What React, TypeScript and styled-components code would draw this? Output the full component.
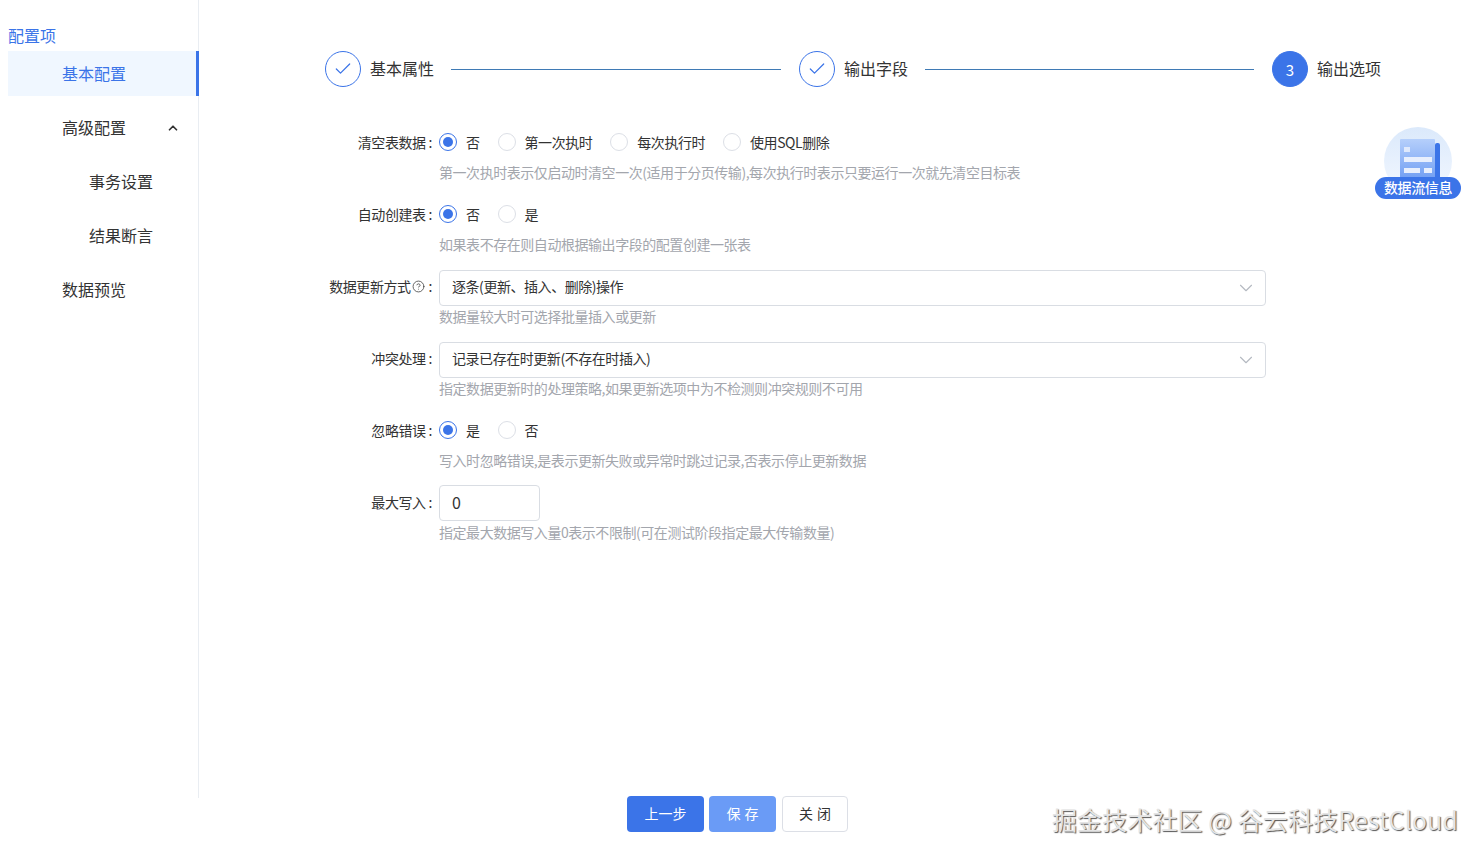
import React, {FC} from "react";
import styled, {createGlobalStyle} from "styled-components";
import {Check, ChevronDown, ChevronUp, CircleHelp} from "lucide-react";

const GlobalStyle = createGlobalStyle`
  html, body {
    margin: 0;
    padding: 0;
    background: #fff;
  }
  body {
    font-family: "Noto Sans CJK SC", "Noto Sans", sans-serif;
    color: #333;
    overflow: hidden;
  }
  * {
    box-sizing: border-box;
  }
`;

const Page = styled.div`
  position: relative;
  width: 1483px;
  height: 859px;
  display: flex;
  flex-direction: column;
`;
const Body = styled.div`
  display: flex;
  height: 798px;
`;
const Sidebar = styled.aside`
  width: 191px;
  margin-left: 8px;
  padding-top: 51px;
  border-right: 1px solid #e9edf2;
  position: relative;
`;
const SideTitle = styled.div`
  position: absolute;
  left: 0;
  top: 23px;
  font-size: 16px;
  line-height: 24px;
  color: #3b74e8;
`;
const MenuItem = styled.div<{$active?: boolean; $indent: number}>`
  height: 45px;
  margin-bottom: 9px;
  margin-right: -1px;
  padding: 0 19px 2px ${(props) => props.$indent}px;
  display: flex;
  align-items: center;
  justify-content: space-between;
  font-size: 16px;
  color: ${(props) => (props.$active ? "#3b74e8" : "#333")};
  background: ${(props) => (props.$active ? "#f0f7ff" : "transparent")};
  border-right: ${(props) => (props.$active ? "3px solid #3b74e8" : "none")};
  svg {
    margin-bottom: -2px;
  }
`;
const Main = styled.main`
  flex: 1;
  min-width: 0;
  padding: 51px 0 0 126px;
`;
const Steps = styled.div`
  display: flex;
  align-items: center;
  height: 36px;
  width: 1056px;
  margin-bottom: 37px;
`;
const StepCircle = styled.div<{$current?: boolean}>`
  width: 36px;
  height: 36px;
  border-radius: 50%;
  flex: none;
  display: flex;
  align-items: center;
  justify-content: center;
  font-size: 15px;
  border: 1px solid #3b74e8;
  color: ${(props) => (props.$current ? "#fff" : "#3b74e8")};
  background: ${(props) => (props.$current ? "#3b74e8" : "#fff")};
`;
const StepLabel = styled.span`
  flex: none;
  margin-left: 9px;
  padding-bottom: 2px;
  font-size: 16px;
  line-height: 34px;
  color: #333;
`;
const StepLine = styled.div<{$width: number}>`
  flex: none;
  width: ${(props) => props.$width}px;
  height: 1px;
  margin: 0 18px 0 17px;
  background: #3f7ab5;
`;
const Form = styled.div`
  display: flex;
  flex-direction: column;
  width: 941px;
`;
const FormItem = styled.div`
  display: grid;
  grid-template-columns: 114px 1fr;
  height: 72px;
`;
const Label = styled.label`
  height: 36px;
  display: flex;
  align-items: center;
  justify-content: flex-end;
  padding-right: 7px;
  font-size: 14px;
  letter-spacing: -0.45px;
  color: #333;
  white-space: nowrap;
  svg {
    flex: none;
    margin: 0 1px;
    color: #444;
  }
`;
const Colon = styled.span`
  margin-left: 3px;
`;
const Control = styled.div`
  min-width: 0;
`;
const RadioRow = styled.div`
  height: 36px;
  display: flex;
  align-items: center;
`;
const RadioItem = styled.span`
  display: inline-flex;
  align-items: center;
  margin-right: 18px;
  font-size: 14px;
  letter-spacing: -0.45px;
  color: #333;
`;
const RadioDot = styled.span<{$checked?: boolean}>`
  width: 18px;
  height: 18px;
  margin-right: 9px;
  border-radius: 50%;
  position: relative;
  background: #fff;
  border: 1px solid ${(props) => (props.$checked ? "#3b74e8" : "#dcdfe6")};
  &::after {
    content: "";
    display: ${(props) => (props.$checked ? "block" : "none")};
    position: absolute;
    left: 3px;
    top: 3px;
    width: 10px;
    height: 10px;
    border-radius: 50%;
    background: #3b74e8;
  }
`;
const SelectBox = styled.div`
  height: 36px;
  margin: 2px 0 -2px;
  display: flex;
  align-items: center;
  justify-content: space-between;
  padding: 0 8px 4px 12px;
  border: 1px solid #d9dde3;
  border-radius: 4px;
  font-size: 14px;
  letter-spacing: -0.45px;
  color: #333;
  background: #fff;
  svg {
    margin-bottom: -4px;
    color: #b4b9c1;
  }
`;
const NumberBox = styled.div`
  width: 101px;
  height: 36px;
  margin: 1px 0 -1px;
  display: flex;
  align-items: center;
  padding: 0 12px 2px;
  border: 1px solid #d9dde3;
  border-radius: 4px;
  font-size: 16px;
  color: #333;
`;
const Help = styled.div`
  margin-top: 2px;
  font-size: 14px;
  letter-spacing: -0.45px;
  line-height: 20px;
  color: #a3a6ad;
  white-space: nowrap;
`;
const Footer = styled.footer`
  height: 36px;
  margin-top: -2px;
  display: flex;
  gap: 5px;
  padding-left: 627px;
`;
const Button = styled.button<{$kind: "primary" | "faded" | "plain"; $width: number}>`
  width: ${(props) => props.$width}px;
  height: 36px;
  margin-left: ${(props) => (props.$kind === "plain" ? "1px" : "0")};
  padding: ${(props) => (props.$kind === "primary" ? "0 0 3px" : "0 0 3px 4px")};
  border-radius: 4px;
  font-family: inherit;
  font-size: 14px;
  letter-spacing: ${(props) => (props.$kind === "primary" ? "0" : "4px")};
  color: ${(props) => (props.$kind === "plain" ? "#333" : "#fff")};
  border: 1px solid ${(props) => (props.$kind === "plain" ? "#dcdfe6" : "transparent")};
  background: ${(props) => {
    if (props.$kind === "primary") return "#3b74e8";
    if (props.$kind === "faded") return "#6a9bf6";
    return "#fff";
  }};
`;
const FlowBadge = styled.div`
  position: absolute;
  left: 1375px;
  top: 127px;
  width: 86px;
  height: 72px;
`;
const FlowPill = styled.div`
  position: absolute;
  left: 0;
  bottom: 0;
  width: 86px;
  height: 22px;
  border-radius: 11px;
  background: #3b74e8;
  color: #fff;
  font-size: 14px;
  font-weight: 500;
  letter-spacing: -0.4px;
  line-height: 21px;
  text-align: center;
  white-space: nowrap;
`;
const FlowIcon = styled.svg`
  position: absolute;
  left: 9px;
  top: 0;
`;
const Watermark = styled.div`
  position: absolute;
  left: 1052px;
  top: 801px;
  font-size: 25px;
  letter-spacing: 0.1px;
  line-height: 36px;
  white-space: nowrap;
  color: #e4e4e4;
  text-shadow: 1px 1px 1px #555;
`;

const FlowGlyph: FC = () => (
    <FlowIcon width="68" height="68" viewBox="0 0 68 68">
        <defs>
            <linearGradient id="flowBg" x1="0" y1="0" x2="0" y2="1">
                <stop offset="0" stopColor="#dbe9fb"/>
                <stop offset="1" stopColor="#f3f8ff"/>
            </linearGradient>
            <linearGradient id="flowDoc" x1="0" y1="0" x2="0" y2="1">
                <stop offset="0" stopColor="#b5cffb"/>
                <stop offset="1" stopColor="#6b9af2"/>
            </linearGradient>
        </defs>
        <circle cx="34" cy="34" r="34" fill="url(#flowBg)"/>
        <rect x="16" y="12" width="35" height="44" rx="1" fill="url(#flowDoc)"/>
        <rect x="51" y="16" width="5" height="40" rx="2" fill="#3b74e8"/>
        <rect x="20" y="20" width="6" height="5" fill="#dfe9fc"/>
        <rect x="20" y="30" width="28" height="5" fill="#e8effd"/>
        <rect x="20" y="41" width="16" height="5" fill="#e8effd"/>
        <rect x="40" y="41" width="8" height="5" fill="#e8effd"/>
    </FlowIcon>
);

const menu = [
    {name: "基本配置", indent: 54, active: true},
    {name: "高级配置", indent: 54, arrow: true},
    {name: "事务设置", indent: 81},
    {name: "结果断言", indent: 81},
    {name: "数据预览", indent: 54},
];

const Radios: FC<{options: string[]}> = ({options}) => (
    <RadioRow>
        {options.map((option, index) => (
            <RadioItem key={option}>
                <RadioDot $checked={index === 0}/>
                {option}
            </RadioItem>
        ))}
    </RadioRow>
);

const Arrow: FC = () => <ChevronDown size={22} strokeWidth={1.2}/>;

const App: FC = () => {
    return (
        <Page>
            <GlobalStyle/>
            <Body>
                <Sidebar>
                    <SideTitle>配置项</SideTitle>
                    {menu.map((item) => (
                        <MenuItem key={item.name} $active={item.active} $indent={item.indent}>
                            {item.name}
                            {item.arrow && <ChevronUp size={14} strokeWidth={3} color="#333"/>}
                        </MenuItem>
                    ))}
                </Sidebar>
                <Main>
                    <Steps>
                        <StepCircle><Check size={20} strokeWidth={1.5}/></StepCircle>
                        <StepLabel>基本属性</StepLabel>
                        <StepLine $width={330}/>
                        <StepCircle><Check size={20} strokeWidth={1.5}/></StepCircle>
                        <StepLabel>输出字段</StepLabel>
                        <StepLine $width={329}/>
                        <StepCircle $current>3</StepCircle>
                        <StepLabel>输出选项</StepLabel>
                    </Steps>
                    <Form>
                        <FormItem>
                            <Label>清空表数据<Colon>:</Colon></Label>
                            <Control>
                                <Radios options={["否", "第一次执时", "每次执行时", "使用SQL删除"]}/>
                                <Help>第一次执时表示仅启动时清空一次(适用于分页传输),每次执行时表示只要运行一次就先清空目标表</Help>
                            </Control>
                        </FormItem>
                        <FormItem>
                            <Label>自动创建表<Colon>:</Colon></Label>
                            <Control>
                                <Radios options={["否", "是"]}/>
                                <Help>如果表不存在则自动根据输出字段的配置创建一张表</Help>
                            </Control>
                        </FormItem>
                        <FormItem>
                            <Label>数据更新方式<CircleHelp size={13} strokeWidth={1.5}/><Colon>:</Colon></Label>
                            <Control>
                                <SelectBox>逐条(更新、插入、删除)操作<Arrow/></SelectBox>
                                <Help>数据量较大时可选择批量插入或更新</Help>
                            </Control>
                        </FormItem>
                        <FormItem>
                            <Label>冲突处理<Colon>:</Colon></Label>
                            <Control>
                                <SelectBox>记录已存在时更新(不存在时插入)<Arrow/></SelectBox>
                                <Help>指定数据更新时的处理策略,如果更新选项中为不检测则冲突规则不可用</Help>
                            </Control>
                        </FormItem>
                        <FormItem>
                            <Label>忽略错误<Colon>:</Colon></Label>
                            <Control>
                                <Radios options={["是", "否"]}/>
                                <Help>写入时忽略错误,是表示更新失败或异常时跳过记录,否表示停止更新数据</Help>
                            </Control>
                        </FormItem>
                        <FormItem>
                            <Label>最大写入<Colon>:</Colon></Label>
                            <Control>
                                <NumberBox>0</NumberBox>
                                <Help>指定最大数据写入量0表示不限制(可在测试阶段指定最大传输数量)</Help>
                            </Control>
                        </FormItem>
                    </Form>
                </Main>
            </Body>
            <Footer>
                <Button $kind="primary" $width={77}>上一步</Button>
                <Button $kind="faded" $width={67}>保存</Button>
                <Button $kind="plain" $width={66}>关闭</Button>
            </Footer>
            <FlowBadge>
                <FlowGlyph/>
                <FlowPill>数据流信息</FlowPill>
            </FlowBadge>
            <Watermark>掘金技术社区 @ 谷云科技RestCloud</Watermark>
        </Page>
    );
};

export default App;
